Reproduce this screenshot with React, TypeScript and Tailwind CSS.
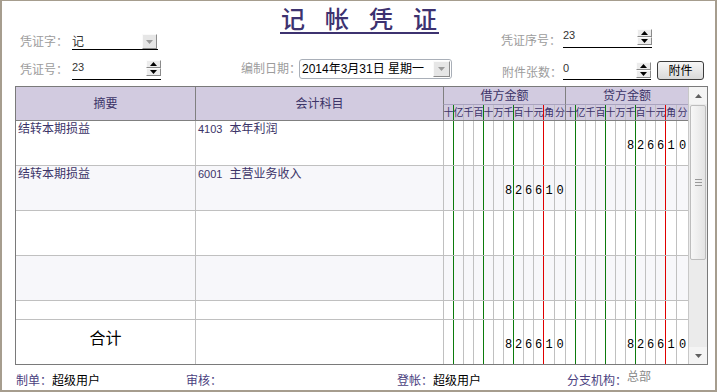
import React from 'react';

const DW = ['w-[10px]','w-[10px]','w-[10px]','w-[10px]','w-[10px]','w-[10px]','w-[10px]','w-[10px]','w-[10px]','w-[10px]','w-[11px]','w-[11px]'];
const CW = ['w-[10px]','w-[10px]','w-[10px]','w-[10px]','w-[10px]','w-[10px]','w-[10px]','w-[10px]','w-[10px]','w-[10px]','w-[11px]','w-[12px]'];
const LC = ['border-[#c0c0c0]','border-[#0c7a0c]','border-[#c0c0c0]','border-[#c0c0c0]','border-[#0c7a0c]','border-[#c0c0c0]','border-[#c0c0c0]','border-[#0c7a0c]','border-[#c0c0c0]','border-[#c0c0c0]','border-[#e00000]','border-[#c0c0c0]'];
const UNITS = ['十','亿','千','百','十','万','千','百','十','元','角','分'];

function DropBtn({ big }: { big?: boolean }) {
  return (
    <div className={`${big ? 'w-[17px] h-[16px]' : 'w-[15px] h-[15px]'} bg-[#e6e6e6] border border-[#fafafa] border-r-[#8c8c8c] border-b-[#8c8c8c] flex items-center justify-center`}>
      <svg width="7" height="4" viewBox="0 0 7 4"><path d="M0 0H7L3.5 4Z" fill="#9a9a9a" /></svg>
    </div>
  );
}

function Spinner() {
  return (
    <div className="flex flex-col w-[15px]">
      <div className="h-[8px] bg-[#ececec] border border-[#fcfcfc] border-r-[#8a8a8a] border-b-[#8a8a8a] flex items-center justify-center">
        <svg width="7" height="4" viewBox="0 0 7 4"><path d="M3.5 0L7 4H0Z" fill="#000" /></svg>
      </div>
      <div className="h-[8px] bg-[#ececec] border border-[#fcfcfc] border-r-[#8a8a8a] border-b-[#8a8a8a] flex items-center justify-center">
        <svg width="7" height="4" viewBox="0 0 7 4"><path d="M0 0H7L3.5 4Z" fill="#000" /></svg>
      </div>
    </div>
  );
}

function HeaderAmounts({ title, credit }: { title: string; credit?: boolean }) {
  const widths = credit ? CW : DW;
  return (
    <div className="flex flex-col h-full">
      <div className="h-[18px] border-l border-b border-l-[#808080] border-b-[#a9a3bf] flex items-center justify-center text-[12px] text-[#3c3468]">
        {title}
      </div>
      <div className="flex flex-1">
        {widths.map((w, i) => (
          <div
            key={i}
            className={`${w} h-full border-l ${i === 0 ? 'border-[#808080]' : LC[i]} flex items-center justify-center text-[10px] leading-[10px] text-[#3c3468] overflow-visible whitespace-nowrap`}
          >
            {UNITS[i]}
          </div>
        ))}
      </div>
    </div>
  );
}

function Amounts({ digits, credit, pad }: { digits?: string; credit?: boolean; pad?: boolean }) {
  const widths = credit ? CW : DW;
  const chars = (digits ?? '').padStart(12, ' ').split('');
  return (
    <div className="flex h-full">
      {widths.map((w, i) => (
        <div
          key={i}
          className={`${w} h-full border-l ${LC[i]} flex items-center justify-center ${pad ? 'pt-[5px]' : ''} font-['Liberation_Mono',monospace] text-[12px] text-black`}
        >
          {chars[i] !== ' ' ? chars[i] : ''}
        </div>
      ))}
    </div>
  );
}

type Row = { summary?: string; code?: string; name?: string; debit?: string; credit?: string };

function DataRow({ row, alt, short }: { row: Row; alt?: boolean; short?: boolean }) {
  return (
    <div className={`flex ${short ? 'h-[19px]' : 'h-[45px]'} border-b border-[#c0c0c0] ${alt ? 'bg-[#f7f7fa]' : 'bg-white'}`}>
      <div className="w-[179px] pl-[2px] pt-[1px] text-[12px] leading-[14px] text-[#3c3468]">{row.summary}</div>
      <div className="w-[248px] border-l border-[#c0c0c0] pl-[2px] pt-[1px] flex items-start text-[#3c3468]">
        {row.code && (
          <>
            <span className="text-[11px] leading-[14px]">{row.code}</span>
            <span className="ml-[7px] text-[12px] leading-[14px]">{row.name}</span>
          </>
        )}
      </div>
      <Amounts digits={row.debit} pad />
      <Amounts digits={row.credit} credit pad />
    </div>
  );
}

export default function App() {
  const rows: Row[] = [
    { summary: '结转本期损益', code: '4103', name: '本年利润', credit: '826610' },
    { summary: '结转本期损益', code: '6001', name: '主营业务收入', debit: '826610' },
    {},
    {},
  ];
  const label = 'text-[12px] leading-[14px] text-[#9c9c9c] whitespace-nowrap shrink-0';
  return (
    <div className="w-[717px] h-[392px] bg-white border-t border-l-2 border-r-2 border-b-2 border-[#a69d8e] overflow-hidden font-['Liberation_Sans','Noto_Sans_CJK_SC',sans-serif] text-black">
      {/* top form */}
      <div className="flex h-[85px] pl-[18px]">
        <div className="w-[221px] flex flex-col">
          <div className="mt-[33px] flex items-center h-[16px]">
            <span className={`w-[52px] ${label}`}>凭证字：</span>
            <div className="w-[86px] h-[16px] border-b border-black flex justify-between items-start">
              <span className="text-[12px] leading-[14px] text-[#333] pt-[1px]">记</span>
              <div className="mr-[1px]"><DropBtn /></div>
            </div>
          </div>
          <div className="mt-[9px] flex items-center h-[21px]">
            <span className={`w-[52px] ${label}`}>凭证号：</span>
            <div className="w-[89px] h-[21px] border-b border-black flex justify-between items-start pt-[1px]">
              <span className="text-[11px] leading-[12px] text-[#333] pt-[1px]">23</span>
              <Spinner />
            </div>
          </div>
        </div>

        <div className="w-[260px] flex flex-col">
          <div className="mt-[6px] ml-[39px] w-fit flex gap-[20px] border-b-2 border-[#3d3270] text-[24px] leading-[25px] font-medium text-[#3d3270] pl-[1px] pr-[2px]">
            <span>记</span>
            <span>帐</span>
            <span>凭</span>
            <span>证</span>
          </div>
          <div className="mt-[25px] flex items-center h-[20px]">
            <span className={`w-[58px] ${label}`}>编制日期：</span>
            <div className="w-[153px] h-[20px] shrink-0 rounded-[3px] border border-[#a9afb8] flex items-center justify-between pl-[2px] pr-[1px]">
              <span className="text-[12px] leading-[14px] text-black whitespace-nowrap">2014年3月31日 星期一</span>
              <DropBtn big />
            </div>
          </div>
        </div>

        <div className="flex flex-col">
          <div className="mt-[28px] flex items-end h-[19px]">
            <span className={`w-[62px] ${label}`}>凭证序号：</span>
            <div className="w-[89px] h-[19px] border-b border-black flex justify-between items-start">
              <span className="text-[11px] leading-[12px] text-[#333]">23</span>
              <Spinner />
            </div>
          </div>
          <div className="mt-[13px] flex items-end h-[19px]">
            <span className={`w-[62px] pl-[1px] ${label}`}>附件张数：</span>
            <div className="w-[88px] h-[19px] border-b border-black flex justify-between items-start pt-[1px]">
              <span className="text-[11px] leading-[12px] text-[#333]">0</span>
              <Spinner />
            </div>
            <button className="ml-[6px] w-[47px] h-[19px] rounded-[3px] border border-[#3c3c3c] bg-gradient-to-b from-[#f7f7f7] to-[#d9d9d9] text-[12px] leading-[14px] text-black flex items-center justify-center">
              附件
            </button>
          </div>
        </div>
      </div>

      {/* table */}
      <div className="ml-[13px] w-[693px] h-[279px] border border-[#7a7a7a] flex">
        <div className="w-[672px] flex flex-col">
          <div className="flex h-[34px] border-b border-[#808080] bg-[#d2cbe0]">
            <div className="w-[179px] flex items-center justify-center text-[12px] text-[#3c3468]">摘要</div>
            <div className="w-[248px] border-l border-[#808080] flex items-center justify-center text-[12px] text-[#3c3468]">会计科目</div>
            <HeaderAmounts title="借方金额" />
            <HeaderAmounts title="贷方金额" credit />
          </div>
          {rows.map((r, i) => (
            <DataRow key={i} row={r} alt={i % 2 === 1} />
          ))}
          <DataRow row={{}} short />
          <div className="flex h-[44px] bg-white">
            <div className="w-[179px] flex items-center justify-center pb-[6px] text-[16px] text-black">合计</div>
            <div className="w-[248px] border-l border-[#c0c0c0]" />
            <Amounts digits="826610" pad />
            <Amounts digits="826610" credit pad />
          </div>
        </div>
        <div className="w-[19px] border-l border-[#c8c8c8] bg-[#ebebeb] flex flex-col">
          <div className="h-[17px] flex items-center justify-center bg-[#f4f4f4]">
            <svg width="7" height="4" viewBox="0 0 7 4"><path d="M3.5 0L7 4H0Z" fill="#606060" /></svg>
          </div>
          <div className="flex-1 px-[1px]">
            <div className="mt-[1px] h-[155px] rounded-[2px] border border-[#bdbdbd] bg-gradient-to-r from-[#f7f7f7] to-[#e4e4e4] flex flex-col items-center justify-center gap-[2px]">
              <div className="w-[7px] h-[1px] bg-[#9a9a9a]" />
              <div className="w-[7px] h-[1px] bg-[#9a9a9a]" />
              <div className="w-[7px] h-[1px] bg-[#9a9a9a]" />
            </div>
          </div>
          <div className="h-[17px] flex items-center justify-center bg-[#f4f4f4]">
            <svg width="7" height="4" viewBox="0 0 7 4"><path d="M0 0H7L3.5 4Z" fill="#606060" /></svg>
          </div>
        </div>
      </div>

      {/* footer */}
      <div className="flex h-[25px] items-center pt-[6px] pl-[14px] text-[12px] leading-[14px] whitespace-nowrap">
        <div className="w-[170px] flex">
          <span className="text-[#4b3f80]">制单：</span>
          <span className="text-black">超级用户</span>
        </div>
        <div className="w-[211px] flex">
          <span className="text-[#4b3f80]">审核：</span>
        </div>
        <div className="w-[170px] flex">
          <span className="text-[#4b3f80]">登帐：</span>
          <span className="text-black">超级用户</span>
        </div>
        <div className="flex items-start">
          <span className="w-[60px] shrink-0 text-[#4b3f80]">分支机构：</span>
          <span className="text-[#8a8a8a] -mt-[4px]">总部</span>
        </div>
      </div>
    </div>
  );
}
